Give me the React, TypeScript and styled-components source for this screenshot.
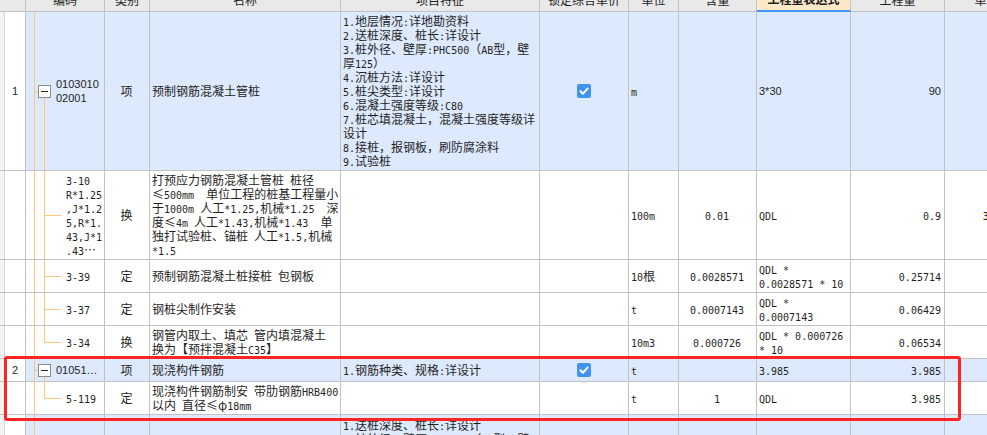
import React from 'react';
import styled, { createGlobalStyle } from 'styled-components';

const GlobalStyle = createGlobalStyle`
  html, body {
    margin: 0;
    padding: 0;
    background: #ffffff;
  }
  body {
    overflow: hidden;
    font-family: "Noto Sans CJK SC", sans-serif;
    font-size: 12px;
    color: #1f1f1f;
  }
`;

const COLS = '26px 79px 45px 191px 199px 89px 50px 78px 94px 94px 84px';
const GRID_LINE = '#c2c2c2';
const TREE = '#ffc67c';
const TINT = '#dde9fc';

const Page = styled.div`
  position: relative;
  width: 987px;
  height: 435px;
  overflow: hidden;
`;

const Sheet = styled.div`
  margin-top: -13px;
  width: 1028px;
`;

const HeaderRow = styled.div`
  display: grid;
  grid-template-columns: ${COLS};
  height: 25px;
`;

const HeaderCell = styled.div<{ $active?: boolean }>`
  box-sizing: border-box;
  display: flex;
  align-items: center;
  justify-content: center;
  background: ${(p) => (p.$active ? '#fde8c8' : '#e9e9e9')};
  border-right: 1px solid ${GRID_LINE};
  border-bottom: ${(p) => (p.$active ? '2px solid #3d96f4' : `1px solid ${GRID_LINE}`)};
  font-weight: ${(p) => (p.$active ? 700 : 400)};
  white-space: nowrap;
  overflow: hidden;
`;

const Row = styled.div<{ $h: number; $tint?: boolean }>`
  display: grid;
  grid-template-columns: ${COLS};
  height: ${(p) => p.$h}px;
  background: ${(p) => (p.$tint ? TINT : '#ffffff')};
`;

const Cell = styled.div<{ $align?: 'left' | 'center' | 'right' }>`
  box-sizing: border-box;
  display: flex;
  flex-direction: column;
  justify-content: center;
  align-items: ${(p) =>
    p.$align === 'center' ? 'center' : p.$align === 'right' ? 'flex-end' : 'flex-start'};
  text-align: ${(p) => p.$align || 'left'};
  padding: 0 3px 0 2px;
  border-right: 1px solid ${GRID_LINE};
  border-bottom: 1px solid ${GRID_LINE};
  overflow: hidden;
`;

const NumCell = styled(Cell)`
  align-items: center;
  padding: 0 0 0 5px;
  background: #ffffff;
  box-shadow: inset 4px 0 0 #f3f3f3, inset 5px 0 0 #d6d6d6;
  font-family: "Liberation Sans", Arial, sans-serif;
  font-size: 11px;
`;

type TreeKind = 'parent' | 'child' | 'last';

const bar = (x: string, y: string, w: string, h: string) =>
  `linear-gradient(${TREE}, ${TREE}) ${x} ${y} / ${w} ${h} no-repeat`;

const treeLayers = (kind: TreeKind) => {
  const rail = bar('8px', '0', '1px', '100%');
  if (kind === 'parent') {
    return [rail, bar('8px', '50%', '4px', '1px'), bar('18px', '100%', '1px', '50%')].join(', ');
  }
  const sub = kind === 'last' ? bar('18px', '0', '1px', '50%') : bar('18px', '0', '1px', '100%');
  return [rail, sub, bar('18px', '50%', '17px', '1px')].join(', ');
};

const CodeCell = styled.div<{ $kind: TreeKind; $tint?: boolean }>`
  box-sizing: border-box;
  display: flex;
  align-items: center;
  gap: 5px;
  padding-left: ${(p) => (p.$kind === 'parent' ? '12px' : '40px')};
  border-right: 1px solid ${GRID_LINE};
  border-bottom: 1px solid ${GRID_LINE};
  background: ${(p) => treeLayers(p.$kind)};
  background-color: ${(p) => (p.$tint ? TINT : '#ffffff')};
  overflow: hidden;
`;

const Fold = styled.span`
  box-sizing: border-box;
  position: relative;
  flex: none;
  width: 13px;
  height: 13px;
  border: 1px solid #8c8c8c;
  background: #ffffff;

  &::after {
    content: '';
    position: absolute;
    left: 2px;
    top: 5px;
    width: 7px;
    height: 1px;
    background: #2a2a2a;
  }
`;

const Line = styled.div<{ $sans?: boolean }>`
  height: 14px;
  line-height: 14px;
  white-space: pre;
  font-family: ${(p) =>
    p.$sans ? '"Liberation Sans", Arial, sans-serif' : '"Noto Sans CJK SC", sans-serif'};
  font-size: ${(p) => (p.$sans ? '11px' : '12px')};
`;

const Latin = styled.span`
  font-family: "DejaVu Sans Mono", monospace;
  font-size: 10px;
`;

const Check = styled.span`
  display: flex;
  width: 14px;
  height: 14px;
  border-radius: 2px;
  background: #4193ef;
`;

const Mark = styled.div`
  position: absolute;
  left: 4px;
  top: 356px;
  width: 957px;
  height: 65px;
  box-sizing: border-box;
  border: 3px solid #ff2424;
  border-radius: 3px;
  pointer-events: none;
`;

const mix = (s: string) =>
  s
    .split(/([\x20-\x7e]+)/)
    .filter(Boolean)
    .map((part, i) =>
      /^[\x20-\x7e]+$/.test(part) ? (
        <Latin key={i}>{part}</Latin>
      ) : (
        <React.Fragment key={i}>{part}</React.Fragment>
      )
    );

const Text = ({ value, sans }: { value?: string; sans?: boolean }) => {
  if (!value) return null;
  return (
    <>
      {value.split('\n').map((l, i) => (
        <Line key={i} $sans={sans}>
          {sans ? l : mix(l)}
        </Line>
      ))}
    </>
  );
};

const Checkbox = () => (
  <Check>
    <svg width="14" height="14" viewBox="0 0 14 14">
      <path d="M3.4 7.3 L5.9 9.7 L10.6 4.6" fill="none" stroke="#ffffff" strokeWidth="2" strokeLinecap="round" strokeLinejoin="round" />
    </svg>
  </Check>
);

interface RowData {
  no?: string;
  code: string;
  kind: TreeKind;
  type: string;
  name: string;
  feature?: string;
  locked?: boolean;
  unit?: string;
  qty?: string;
  expr?: string;
  amount?: string;
  price?: string;
  h: number;
  sansNums?: boolean;
}

const headers = ['', '编码', '类别', '名称', '项目特征', '锁定综合单价', '单位', '含量', '工程量表达式', '工程量', '单价'];

const rows: RowData[] = [
  {
    no: '1',
    code: '0103010\n02001',
    kind: 'parent',
    type: '项',
    name: '预制钢筋混凝土管桩',
    feature:
      '1.地层情况:详地勘资料\n2.送桩深度、桩长:详设计\n3.桩外径、壁厚:PHC500（AB型，壁\n厚125）\n4.沉桩方法:详设计\n5.桩尖类型:详设计\n6.混凝土强度等级:C80\n7.桩芯填混凝土，混凝土强度等级详\n设计\n8.接桩，报钢板，刷防腐涂料\n9.试验桩',
    locked: true,
    unit: 'm',
    expr: '3*30',
    amount: '90',
    h: 159,
    sansNums: true,
  },
  {
    code: '3-10\nR*1.25\n,J*1.2\n5,R*1.\n43,J*1\n.43…',
    kind: 'child',
    type: '换',
    name: '打预应力钢筋混凝土管桩 桩径\n≤500mm  单位工程的桩基工程量小\n于1000m 人工*1.25,机械*1.25  深\n度≤4m 人工*1.43,机械*1.43  单\n独打试验桩、锚桩 人工*1.5,机械\n*1.5',
    unit: '100m',
    qty: '0.01',
    expr: 'QDL',
    amount: '0.9',
    price: '3587.34',
    h: 89,
  },
  {
    code: '3-39',
    kind: 'child',
    type: '定',
    name: '预制钢筋混凝土桩接桩 包钢板',
    unit: '10根',
    qty: '0.0028571',
    expr: 'QDL *\n0.0028571 * 10',
    amount: '0.25714',
    price: '812.55',
    h: 33,
  },
  {
    code: '3-37',
    kind: 'child',
    type: '定',
    name: '钢桩尖制作安装',
    unit: 't',
    qty: '0.0007143',
    expr: 'QDL *\n0.0007143',
    amount: '0.06429',
    price: '5213.6',
    h: 33,
  },
  {
    code: '3-34',
    kind: 'last',
    type: '换',
    name: '钢管内取土、填芯 管内填混凝土\n换为【预拌混凝土C35】',
    unit: '10m3',
    qty: '0.000726',
    expr: 'QDL * 0.000726\n* 10',
    amount: '0.06534',
    price: '4120.8',
    h: 33,
  },
  {
    no: '2',
    code: '01051…',
    kind: 'parent',
    type: '项',
    name: '现浇构件钢筋',
    feature: '1.钢筋种类、规格:详设计',
    locked: true,
    unit: 't',
    expr: '3.985',
    amount: '3.985',
    h: 23,
  },
  {
    code: '5-119',
    kind: 'last',
    type: '定',
    name: '现浇构件钢筋制安 带肋钢筋HRB400\n以内 直径≤φ18mm',
    unit: 't',
    qty: '1',
    expr: 'QDL',
    amount: '3.985',
    price: '5046.2',
    h: 33,
  },
  {
    no: '3',
    code: '0103010\n02002',
    kind: 'parent',
    type: '项',
    name: '预制钢筋混凝土方桩',
    feature:
      '1.送桩深度、桩长:详设计\n2.桩外径、壁厚:PHC500（AB型，壁\n厚125）\n3.沉桩方法:详设计\n4.桩尖类型:详设计\n5.混凝土强度等级:C80\n6.接桩，报钢板，刷防腐涂料',
    locked: true,
    unit: 'm',
    expr: '3*20',
    amount: '60',
    h: 104,
    sansNums: true,
  },
];

function App() {
  return (
    <Page>
      <GlobalStyle />
      <Sheet>
        <HeaderRow>
          {headers.map((h, i) => (
            <HeaderCell key={i} $active={h === '工程量表达式'}>
              {h}
            </HeaderCell>
          ))}
        </HeaderRow>
        {rows.map((r, i) => {
          const tint = r.kind === 'parent';
          return (
            <Row key={i} $h={r.h} $tint={tint}>
              <NumCell>{r.no}</NumCell>
              <CodeCell $kind={r.kind} $tint={tint}>
                {r.kind === 'parent' && <Fold />}
                <div>
                  <Text value={r.code} sans={r.kind === 'parent'} />
                </div>
              </CodeCell>
              <Cell $align="center">
                <Text value={r.type} />
              </Cell>
              <Cell>
                <Text value={r.name} />
              </Cell>
              <Cell>
                <Text value={r.feature} />
              </Cell>
              <Cell $align="center">{r.locked && <Checkbox />}</Cell>
              <Cell>
                <Text value={r.unit} />
              </Cell>
              <Cell $align="center">
                <Text value={r.qty} />
              </Cell>
              <Cell>
                <Text value={r.expr} sans={r.sansNums} />
              </Cell>
              <Cell $align="right">
                <Text value={r.amount} sans={r.sansNums} />
              </Cell>
              <Cell $align="right">
                <Text value={r.price} />
              </Cell>
            </Row>
          );
        })}
      </Sheet>
      <Mark />
    </Page>
  );
}

export default App;
